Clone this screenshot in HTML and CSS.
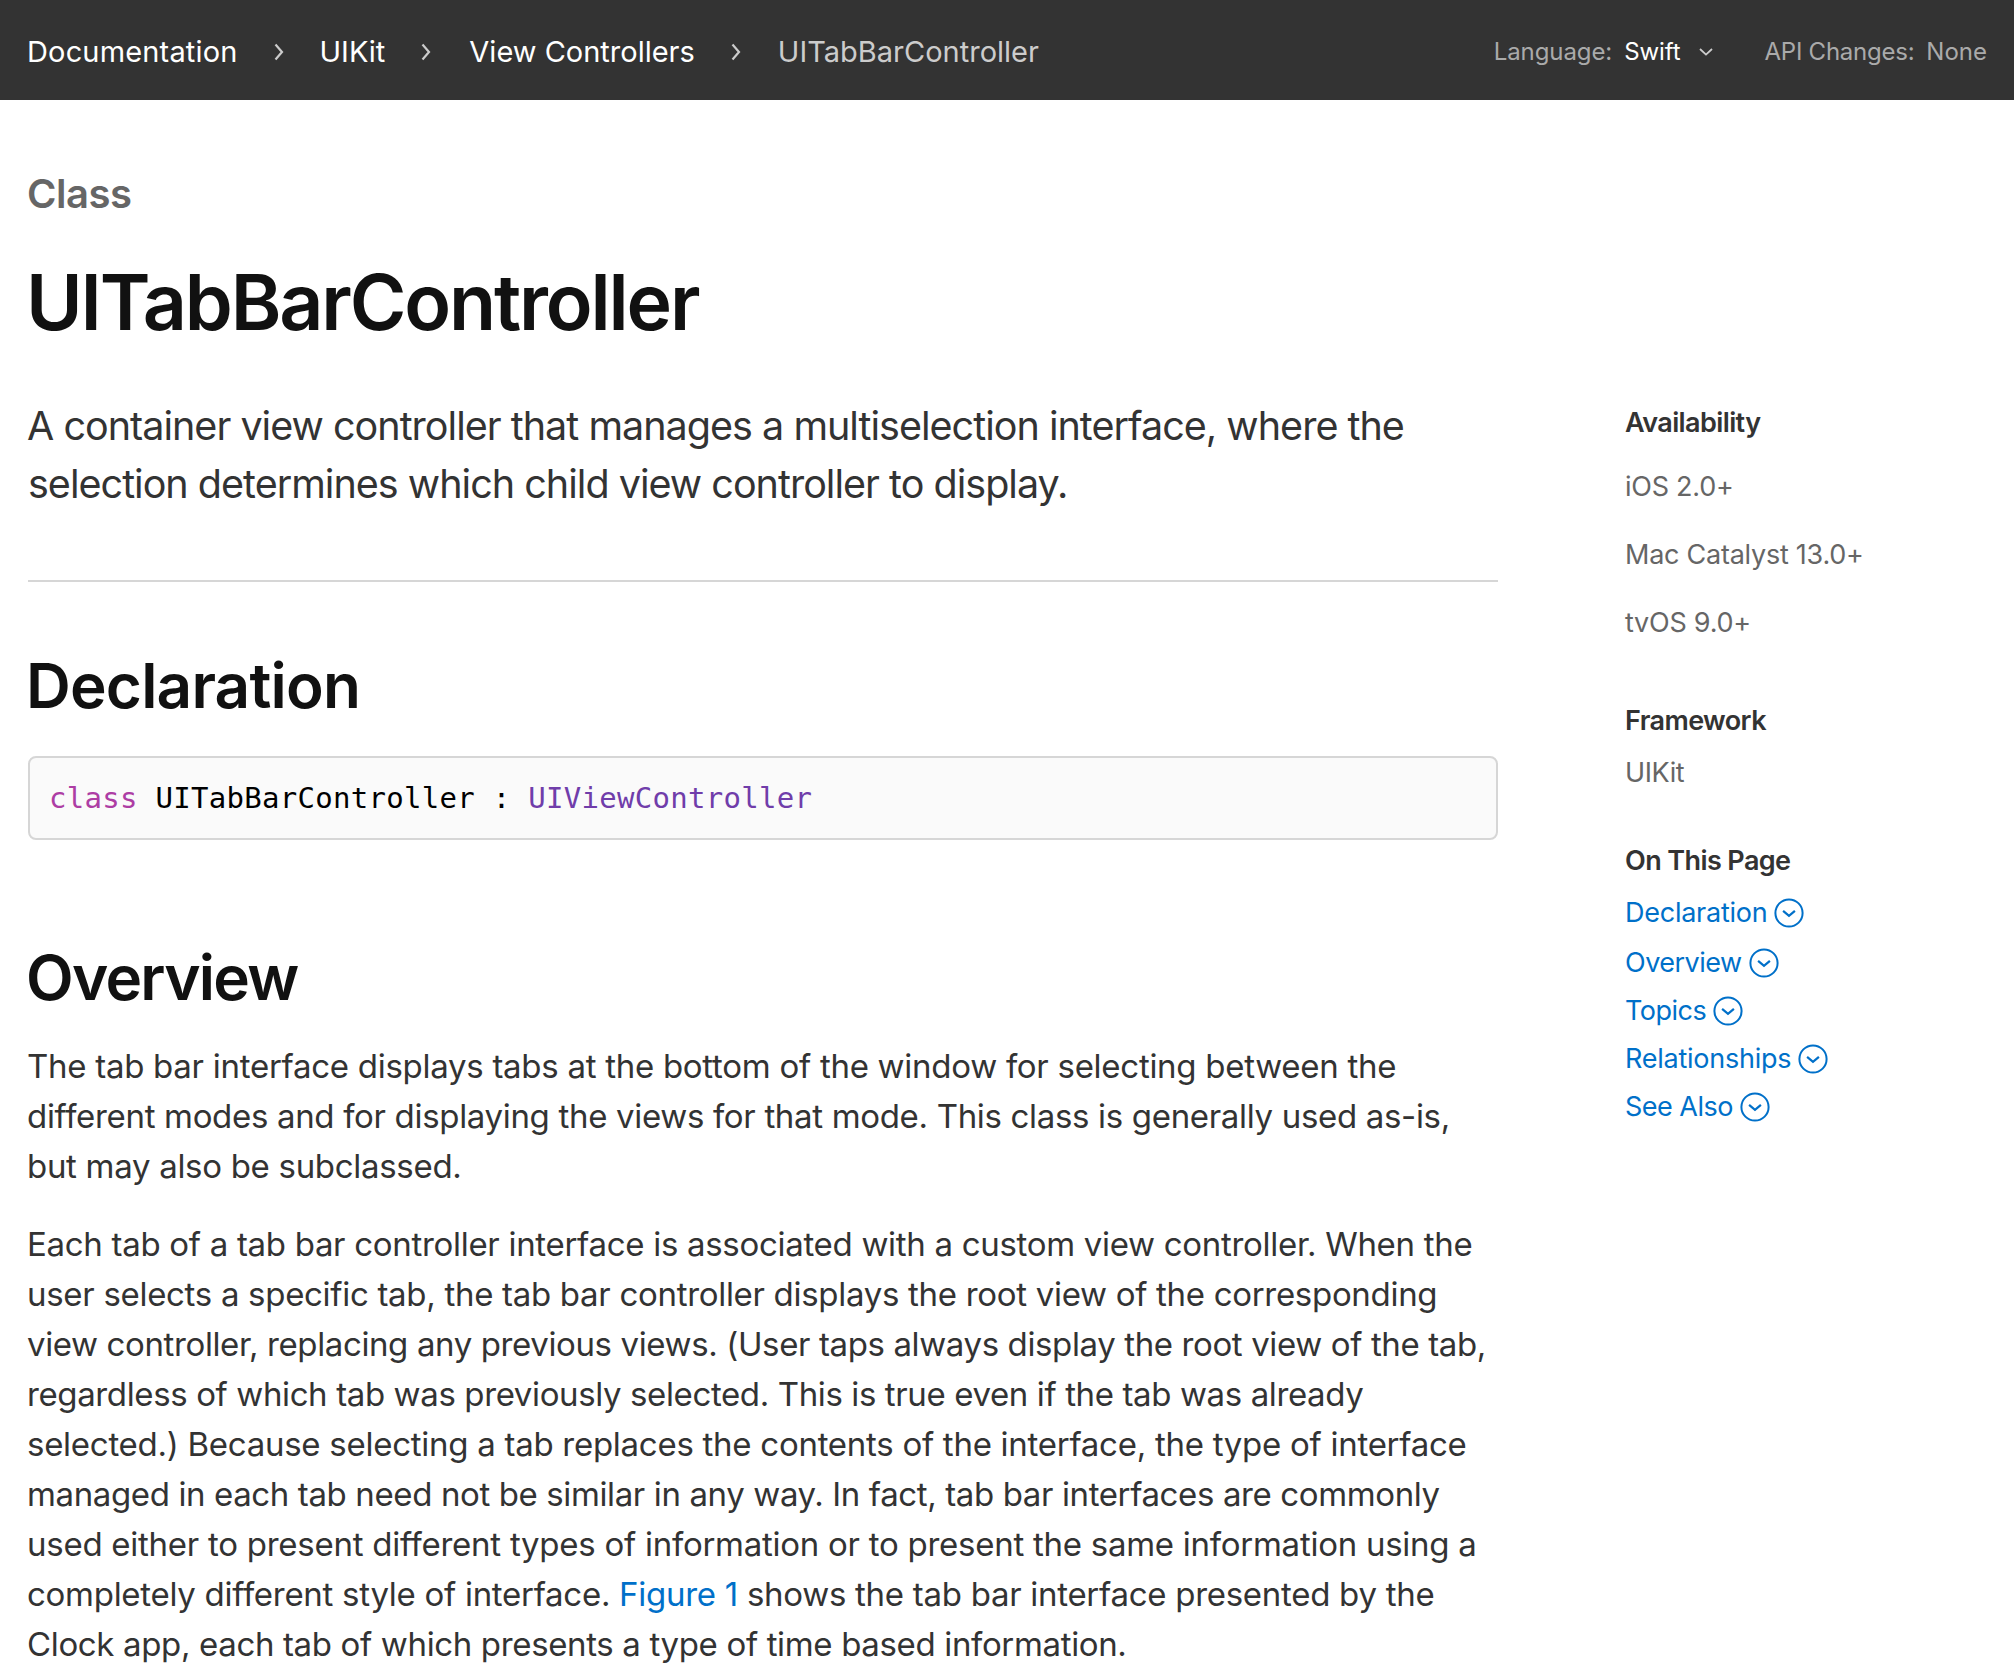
FILE: index.html
```
<!DOCTYPE html>
<html lang="en">
<head>
<meta charset="utf-8">
<title>UITabBarController</title>
<link rel="stylesheet" href="styles.css">
</head>
<body>
<svg class="sprite" aria-hidden="true">
  <symbol id="chevron-right" viewBox="0 0 10 18"><path d="M1.5 1.5 8 9 1.5 16.5" fill="none" stroke="currentColor" stroke-width="2.2"/></symbol>
  <symbol id="chevron-down" viewBox="0 0 14 8"><path d="M1 1 7 6.6 13 1" fill="none" stroke="currentColor" stroke-width="1.8"/></symbol>
  <symbol id="circle-down" viewBox="0 0 30 30"><g fill="none" stroke="currentColor" stroke-width="2"><circle cx="15" cy="15" r="13.6"/><path d="M9.1 12.8 15 17.9 20.9 12.8" stroke-width="2.2"/></g></symbol>
</svg>
<nav class="navbar">
  <div class="crumbs">
    <a class="crumb crumb-root">Documentation</a>
    <svg class="separator"><use href="#chevron-right"/></svg>
    <a class="crumb">UIKit</a>
    <svg class="separator"><use href="#chevron-right"/></svg>
    <a class="crumb crumb-section">View Controllers</a>
    <svg class="separator"><use href="#chevron-right"/></svg>
    <span class="crumb current">UITabBarController</span>
  </div>
  <div class="settings">
    <span class="label">Language:</span>
    <span class="language">Swift</span>
    <svg class="toggle"><use href="#chevron-down"/></svg>
    <span class="api">API Changes:</span>
    <span class="value">None</span>
  </div>
</nav>
<div class="page">
  <main class="content">
    <div class="eyebrow">Class</div>
    <h1 class="title">UITabBarController</h1>
    <p class="abstract">A container view controller that manages a multiselection interface, where the<br>selection determines which child view controller to display.</p>
    <h2 class="heading declaration-heading">Declaration</h2>
    <pre class="code"><span class="keyword">class</span> UITabBarController : <span class="type">UIViewController</span></pre>
    <h2 class="heading overview-heading">Overview</h2>
    <p class="text summary">
      <span class="line">The tab bar interface displays tabs at the bottom of the window for selecting between the</span>
      <span class="line">different modes and for displaying the views for that mode. This class is generally used as-is,</span>
      <span class="line">but may also be subclassed.</span>
    </p>
    <p class="text details">
      <span class="line">Each tab of a tab bar controller interface is associated with a custom view controller. When the</span>
      <span class="line">user selects a specific tab, the tab bar controller displays the root view of the corresponding</span>
      <span class="line">view controller, replacing any previous views. (User taps always display the root view of the tab,</span>
      <span class="line">regardless of which tab was previously selected. This is true even if the tab was already</span>
      <span class="line">selected.) Because selecting a tab replaces the contents of the interface, the type of interface</span>
      <span class="line">managed in each tab need not be similar in any way. In fact, tab bar interfaces are commonly</span>
      <span class="line">used either to present different types of information or to present the same information using a</span>
      <span class="line">completely different style of interface. <a class="link">Figure 1</a> shows the tab bar interface presented by the</span>
      <span class="line">Clock app, each tab of which presents a type of time based information.</span>
    </p>
  </main>
  <aside class="sidebar">
    <section>
      <h3 class="side-title">Availability</h3>
      <ul class="platforms"><li>iOS 2.0+</li><li>Mac Catalyst 13.0+</li><li>tvOS 9.0+</li></ul>
    </section>
    <section class="framework">
      <h3 class="side-title">Framework</h3>
      <div class="framework-name">UIKit</div>
    </section>
    <section class="contents">
      <h3 class="side-title">On This Page</h3>
      <ul class="anchors">
        <li>Declaration<svg class="jump"><use href="#circle-down"/></svg></li>
        <li class="snug">Overview<svg class="jump"><use href="#circle-down"/></svg></li>
        <li class="snug">Topics<svg class="jump"><use href="#circle-down"/></svg></li>
        <li>Relationships<svg class="jump"><use href="#circle-down"/></svg></li>
        <li class="snug">See Also<svg class="jump"><use href="#circle-down"/></svg></li>
      </ul>
    </section>
  </aside>
</div>
</body>
</html>
```
FILE: styles.css
```
* { box-sizing: border-box; margin: 0; padding: 0; }
html { overflow: hidden; }
body {
  width: 2014px;
  height: 1676px;
  overflow: hidden;
  background: #fff;
  color: #333;
  font-family: Inter, "Liberation Sans", sans-serif;
}
ul { list-style: none; }
.sprite { display: none; }

.navbar {
  display: flex;
  justify-content: space-between;
  height: 100px;
  padding: 0 27px;
  background: #333;
  white-space: nowrap;
}
.crumbs {
  display: flex;
  align-items: center;
  gap: 36px;
  padding-top: 3px;
  font-size: 29px;
  color: #fff;
}
.crumb-root { letter-spacing: 0.16px; }
.crumb-section { margin-left: 2px; }
.current { margin-left: 1px; color: #ccc; }
.separator { width: 10px; height: 18px; margin: 1px 0 0 0; color: #ccc; }
.settings {
  display: flex;
  align-items: center;
  padding-top: 2px;
  font-size: 24px;
  color: #aaa;
}
.label { letter-spacing: -0.09px; }
.language { margin-left: 12px; letter-spacing: -0.1px; color: #fff; }
.toggle { width: 14px; height: 8px; margin: 2px 51px 0 19px; color: #ccc; }
.api { letter-spacing: -0.24px; }
.value { margin-left: 12px; }

.page { display: flex; padding: 70px 0 0 28px; }
.content { width: 1470px; }
.eyebrow {
  margin-left: -1px;
  font-size: 40px;
  line-height: 48px;
  font-weight: 600;
  letter-spacing: -0.45px;
  color: #666;
}
.title {
  margin: 40px 0 0 -2px;
  font-size: 77px;
  line-height: 88px;
  font-weight: 600;
  letter-spacing: -2.15px;
  color: #111;
}
.abstract {
  padding-bottom: 67px;
  border-bottom: 2px solid #d6d6d6;
  margin-top: 51px;
  font-size: 39.5px;
  line-height: 58px;
  letter-spacing: -0.98px;
  text-indent: -1px;
  white-space: nowrap;
}
.heading {
  margin-left: -2px;
  font-size: 62px;
  line-height: 70px;
  font-weight: 600;
  color: #111;
}
.declaration-heading { margin-top: 69px; letter-spacing: -0.8px; }
.overview-heading { margin-top: 103px; letter-spacing: -1.75px; }
.code {
  height: 84px;
  margin-top: 35px;
  padding-left: 19px;
  border: 2px solid #d6d6d6;
  border-radius: 8px;
  background: #fafafa;
  font: 29px/80px "DejaVu Sans Mono", monospace;
  letter-spacing: 0.29px;
  color: #000;
}
.keyword { color: #ad3da4; }
.type { color: #703daa; }
.text {
  margin: 28px 0 0 -1px;
  font-size: 33px;
  line-height: 50px;
  letter-spacing: -0.3px;
  white-space: nowrap;
}
.line { display: block; }
.summary .line:nth-child(1) { letter-spacing: -0.275px; }
.summary .line:nth-child(2) { letter-spacing: -0.324px; }
.details .line:nth-child(1) { letter-spacing: -0.3px; }
.details .line:nth-child(3),
.details .line:nth-child(4),
.details .line:nth-child(6) { letter-spacing: -0.38px; }
.details .line:nth-child(5) { letter-spacing: -0.27px; }
.details .line:nth-child(7) { letter-spacing: -0.262px; }
.details .line:nth-child(8) { letter-spacing: -0.28px; }
.details .line:nth-child(9) { letter-spacing: -0.35px; }
.link { color: #0070c9; }

.sidebar {
  margin-left: 127px;
  padding-top: 233px;
  font-size: 27px;
  line-height: 40px;
  letter-spacing: -0.25px;
  color: #666;
  white-space: nowrap;
}
.side-title {
  font-size: 27px;
  font-weight: 600;
  letter-spacing: -0.6px;
  color: #333;
}
.platforms { display: grid; gap: 28px; margin-top: 24px; }
.framework { margin-top: 58px; }
.framework-name { margin-top: 12px; letter-spacing: -0.4px; }
.contents { margin-top: 48px; }
.anchors { display: grid; gap: 8px; margin-top: 12px; color: #0070c9; }
.anchors li { display: flex; align-items: center; gap: 7px; }
.anchors li:first-child { margin-bottom: 2px; }
.anchors .snug { letter-spacing: -0.52px; }
.jump { width: 30px; height: 30px; margin-bottom: 1px; }
```
